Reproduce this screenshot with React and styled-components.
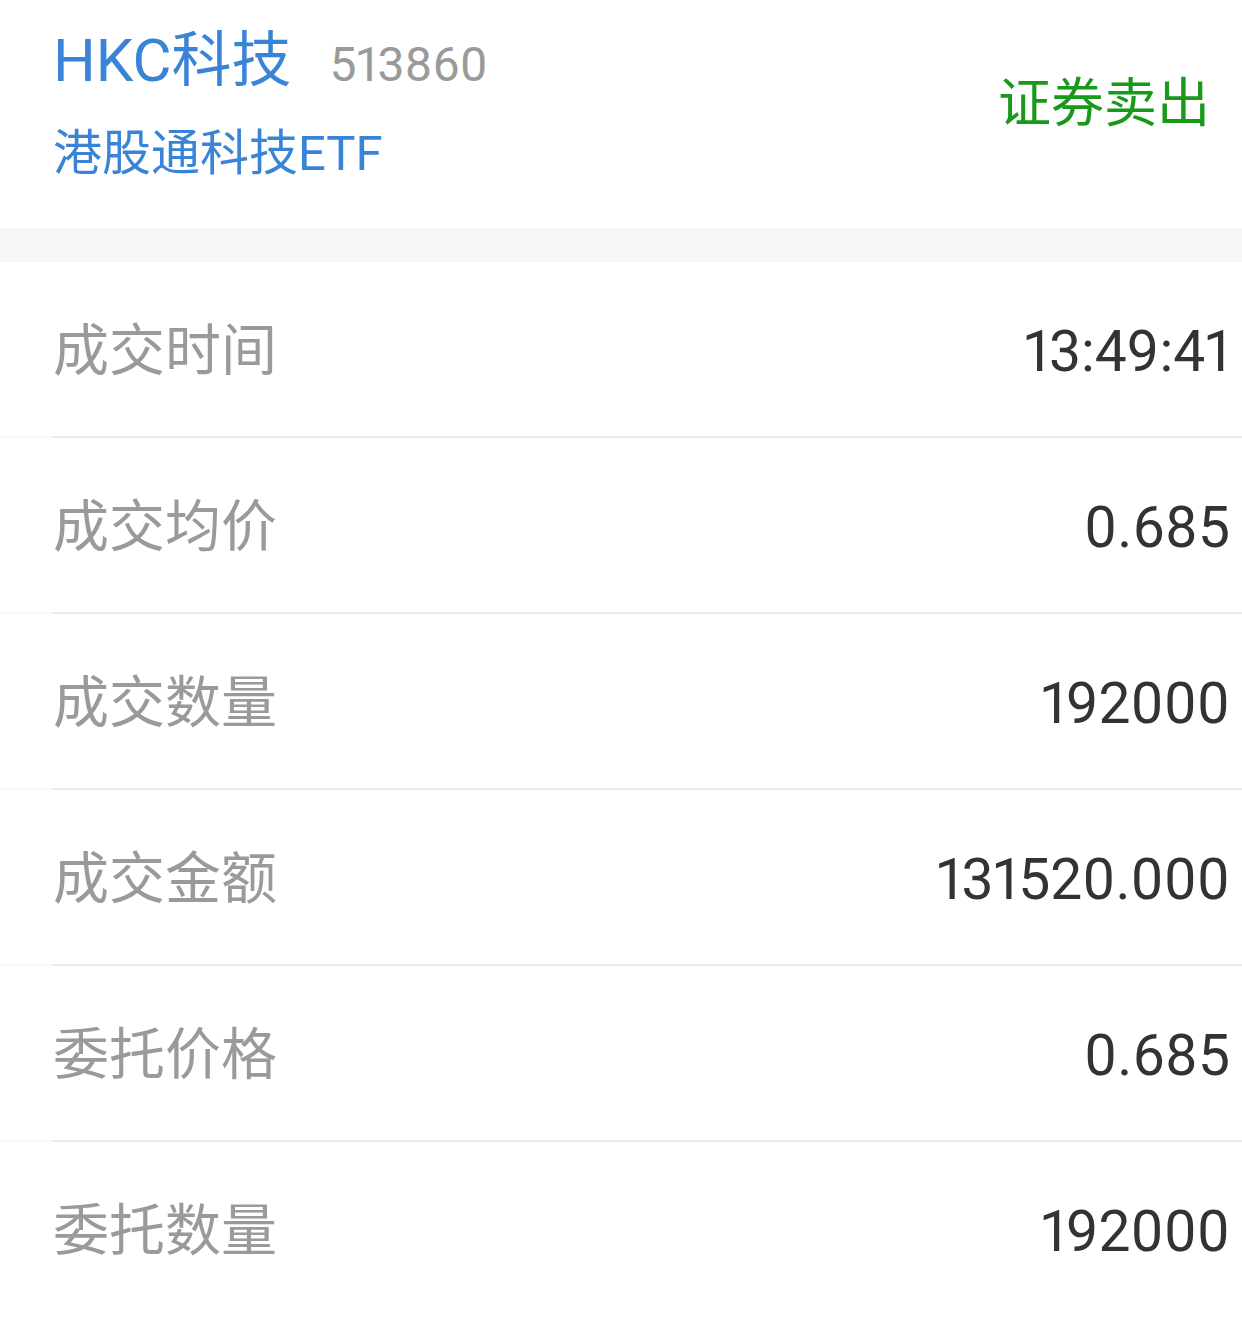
import React from "react";
import styled, { createGlobalStyle } from "styled-components";

const Global = createGlobalStyle`
  html, body { margin: 0; padding: 0; background: #ffffff; }
  body { font-family: Roboto, "Noto Sans CJK SC", "Noto Sans", sans-serif; }
`;

const Page = styled.div`
  width: 1242px;
  background: #ffffff;
`;

const Header = styled.header`
  height: 228px;
  display: flex;
  justify-content: space-between;
  align-items: flex-start;
  padding: 0 32px 0 53px;
  box-sizing: border-box;
`;

const NameBlock = styled.div`
  display: flex;
  flex-direction: column;
  padding-top: 26px;
`;

const TitleLine = styled.div`
  display: flex;
  align-items: baseline;
  gap: 38px;
  height: 70px;
  line-height: 70px;
`;

const Title = styled.span`
  font-size: 60px;
  color: #3a84d8;
`;

const Code = styled.span`
  font-size: 48px;
  color: #9a9a9a;
  font-variant-numeric: proportional-nums;
`;

const Subtitle = styled.div`
  margin-top: 28px;
  font-size: 49px;
  line-height: 60px;
  color: #3a84d8;
`;

const SellTag = styled.div`
  margin-top: 74px;
  font-size: 53px;
  line-height: 60px;
  color: #17991a;
`;

const Band = styled.div`
  height: 34px;
  background: #f5f6f8;
`;

const List = styled.div`
  display: flex;
  flex-direction: column;
`;

const Row = styled.div`
  height: 176px;
  display: flex;
  align-items: center;
  justify-content: space-between;
  padding: 0 12px 0 53px;
  box-sizing: border-box;
  background: ${(p) =>
    p.$divided
      ? "linear-gradient(to right, #f8f8f8 53px, #ececec 53px) left bottom / 100% 2px no-repeat"
      : "none"};
`;

const Label = styled.span`
  font-size: 56px;
  color: #9a9a9a;
  margin-bottom: 9px;
`;

const Value = styled.span`
  font-size: 57px;
  color: #333333;
  font-variant-numeric: proportional-nums;
  margin-top: 2px;
`;

const rows = [
  ["成交时间", "13:49:41"],
  ["成交均价", "0.685"],
  ["成交数量", "192000"],
  ["成交金额", "131520.000"],
  ["委托价格", "0.685"],
  ["委托数量", "192000"],
];

export default function App() {
  return (
    <Page>
      <Global />
      <Header>
        <NameBlock>
          <TitleLine>
            <Title>HKC科技</Title>
            <Code>513860</Code>
          </TitleLine>
          <Subtitle>港股通科技ETF</Subtitle>
        </NameBlock>
        <SellTag>证券卖出</SellTag>
      </Header>
      <Band />
      <List>
        {rows.map(([label, value], i) => (
          <Row key={label} $divided={i < rows.length - 1}>
            <Label>{label}</Label>
            <Value>{value}</Value>
          </Row>
        ))}
      </List>
    </Page>
  );
}
